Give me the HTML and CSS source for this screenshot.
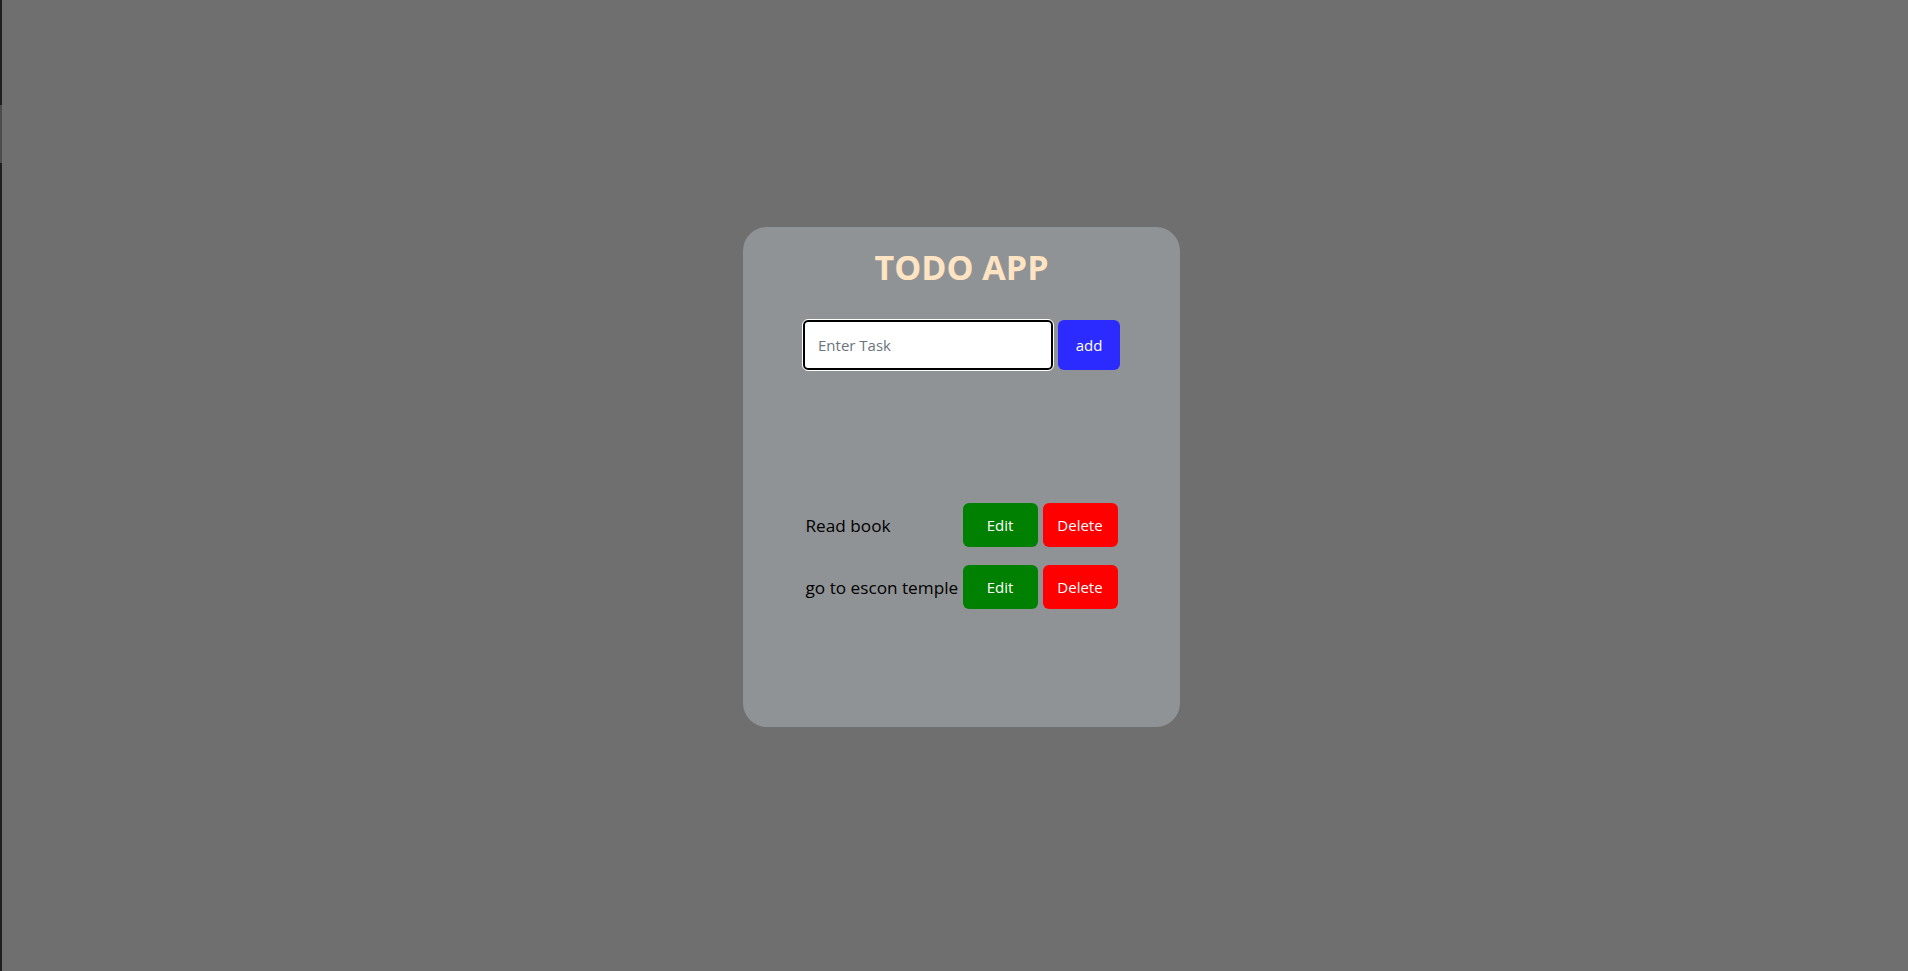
FILE: index.html
```html
<!DOCTYPE html>
<html lang="en">
<head>
<meta charset="utf-8">
<title>Todo App</title>
<link rel="stylesheet" href="styles.css">
</head>
<body>
<div class="page">
  <div class="rail"><div class="rail-thumb"></div></div>
  <main class="stage">
    <section class="card">
      <h1 class="title">TODO APP</h1>
      <div class="entry">
        <input class="task-input" type="text" placeholder="Enter Task">
        <button class="btn btn-add">add</button>
      </div>
      <ul class="tasks">
        <li class="task">
          <span class="task-text">Read book</span>
          <button class="btn btn-edit">Edit</button>
          <button class="btn btn-delete">Delete</button>
        </li>
        <li class="task">
          <span class="task-text">go to escon temple</span>
          <button class="btn btn-edit">Edit</button>
          <button class="btn btn-delete">Delete</button>
        </li>
      </ul>
    </section>
  </main>
</div>
</body>
</html>
```
FILE: styles.css
```css
* { box-sizing: border-box; }
html, body { margin: 0; height: 100%; }
body {
  background: #6f6f6f;
  font-family: "Open Sans", "Noto Sans", sans-serif;
  color: #000;
}
.page {
  display: flex;
  height: 100%;
}
.rail {
  width: 2px;
  background: #1f1f1f;
  flex: none;
}
.rail-thumb {
  margin-top: 105px;
  height: 58px;
  background: #4d4d4d;
}
.stage {
  flex: 1;
  display: flex;
  align-items: center;
  justify-content: center;
  padding-left: 13px;
  padding-bottom: 17px;
}
.card {
  width: 437px;
  height: 500px;
  background: #909396;
  border-radius: 24px;
  display: flex;
  flex-direction: column;
  align-items: center;
  padding-top: 18px;
}
.title {
  margin: 0;
  font-size: 34px;
  line-height: 44px;
  font-weight: 700;
  color: #ffe4c4;
}
.entry {
  display: flex;
  gap: 5px;
  margin-top: 31px;
}
.task-input {
  width: 250px;
  height: 50px;
  border: 2px solid #000;
  outline: 1px solid #fff;
  border-radius: 5px;
  padding: 0 13px;
  font-family: inherit;
  font-size: 15px;
  background: #fff;
  color: #212529;
}
.task-input::placeholder { color: #6c757d; }
.btn {
  flex: none;
  border: none;
  border-radius: 6px;
  color: #fff;
  font-family: inherit;
  font-size: 15px;
  cursor: pointer;
}
.btn-add {
  width: 62px;
  height: 50px;
  background: #2b2bff;
}
.tasks {
  list-style: none;
  margin: 133px 0 0;
  padding: 0;
  display: flex;
  flex-direction: column;
  gap: 18px;
  width: 312px;
}
.task {
  display: flex;
  align-items: center;
  gap: 5px;
}
.task-text {
  flex: 1;
  min-width: 0;
  font-size: 17.2px;
  white-space: nowrap;
}
.btn-edit, .btn-delete {
  width: 75px;
  height: 44px;
}
.btn-edit { background: #008000; }
.btn-delete { background: #ff0000; }
```
